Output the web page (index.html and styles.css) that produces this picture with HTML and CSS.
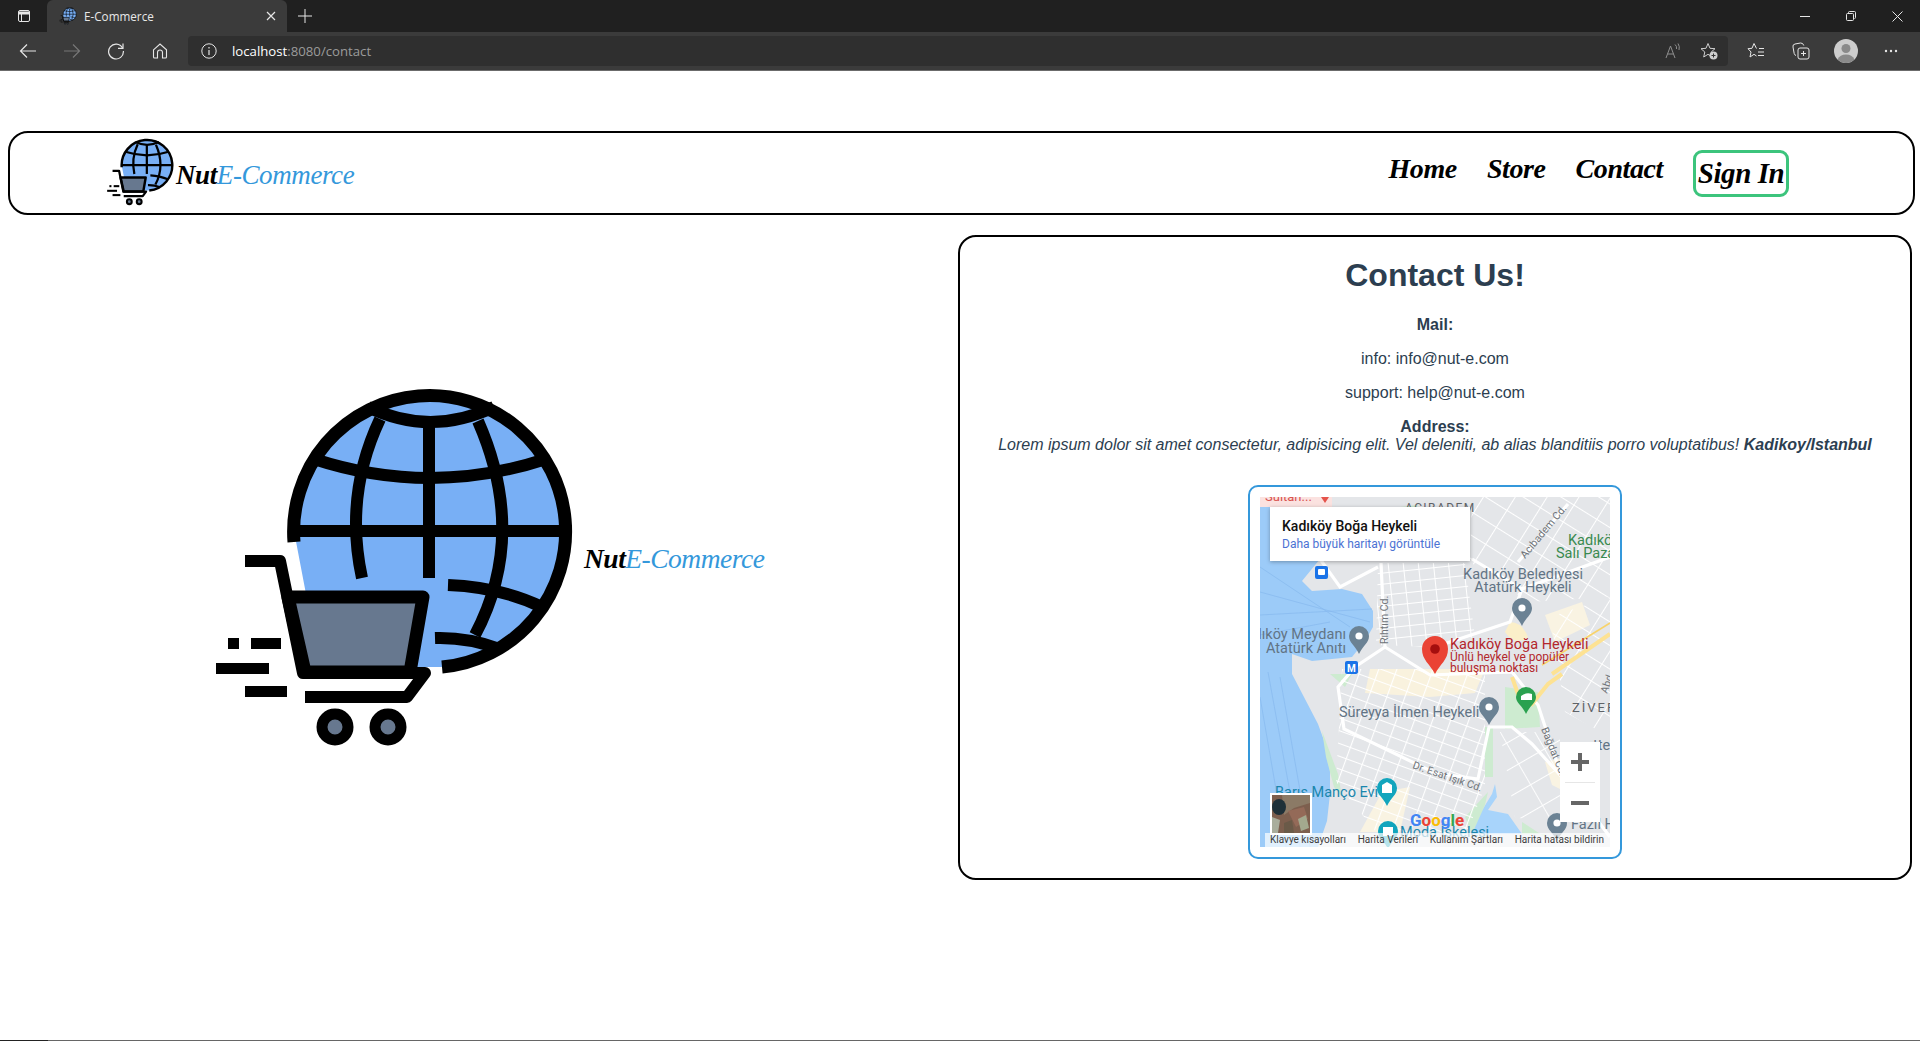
FILE: index.html
```html
<!DOCTYPE html>
<html lang="en">
<head>
  <meta charset="UTF-8" />
  <title>E-Commerce</title>
  <link rel="stylesheet" href="styles.css">
</head>
<body>
  <!-- logo used in the tab, the navbar and the hero -->
  <svg class="sprite" aria-hidden="true">
    <symbol id="logo" viewBox="0 0 370 365">
      <path d="M84 146 A136 136 0 1 1 232 282 L140 282 L100 230 Z" fill="#78aff5"/>
      <g fill="none" stroke="#000" stroke-width="12">
        <path d="M84 157 A136 136 0 1 1 232 282" stroke-width="13"/>
        <path d="M84 146 H356"/>
        <path d="M219 38 V193"/>
        <path d="M158 22 Q220 52 284 22"/>
        <path d="M104 74 Q220 112 336 74"/>
        <path d="M170 34 Q134 110 152 193"/>
        <path d="M268 36 Q318 150 265 250"/>
        <path d="M238 200 Q290 202 332 222"/>
        <path d="M225 253 Q258 252 290 264"/>
      </g>
      <path d="M78 212 H213 L200 287 H95 Z" fill="#67788f" stroke="#000" stroke-width="13" stroke-linejoin="round"/>
      <path d="M35 176 H70 L93 288 H215 L197 312 H95" fill="none" stroke="#000" stroke-width="12" stroke-linejoin="round"/>
      <circle cx="125" cy="342" r="13" fill="#67788f" stroke="#000" stroke-width="11"/>
      <circle cx="178" cy="342" r="13" fill="#67788f" stroke="#000" stroke-width="11"/>
      <rect x="18" y="253" width="11" height="11"/>
      <rect x="41" y="253" width="30" height="11"/>
      <rect x="6" y="278" width="53" height="11"/>
      <rect x="35" y="301" width="42" height="11"/>
    </symbol>
  </svg>

  <!-- browser chrome -->
  <header class="browser">
    <div class="tabstrip">
      <span class="strip-btn">
        <svg width="16" height="16" viewBox="0 0 16 16" fill="none" stroke="#e6e6e6"><rect x="2.5" y="2.5" width="11" height="11" rx="1.5"/><path d="M2.5 5H13.5" stroke-width="3"/><path d="M5.5 5V13.5"/></svg>
      </span>
      <div class="tab">
        <svg class="favicon"><use href="#logo"/></svg>
        <span class="tab-title">E-Commerce</span>
        <svg class="tab-close" width="10" height="10" viewBox="0 0 10 10" stroke="#e6e6e6" stroke-width="1.2"><path d="M1 1L9 9M9 1L1 9"/></svg>
      </div>
      <span class="new-tab">
        <svg width="14" height="14" viewBox="0 0 14 14" stroke="#e6e6e6"><path d="M7 0V14M0 7H14"/></svg>
      </span>
      <div class="window-btns">
        <span><svg width="10" height="10" viewBox="0 0 10 10" stroke="#e6e6e6"><path d="M0 5.5H10"/></svg></span>
        <span><svg width="10" height="10" viewBox="0 0 10 10" fill="none" stroke="#e6e6e6"><rect x="0.5" y="2.5" width="7" height="7" rx="1"/><path d="M2.5 2.5V1.5A1 1 0 0 1 3.5 .5H8.5A1 1 0 0 1 9.5 1.5V6.5A1 1 0 0 1 8.5 7.5"/></svg></span>
        <span><svg width="11" height="11" viewBox="0 0 11 11" stroke="#e6e6e6"><path d="M.5 .5L10.5 10.5M10.5 .5L.5 10.5"/></svg></span>
      </div>
    </div>
    <div class="toolbar">
      <span class="tool-btn"><svg width="18" height="16" viewBox="0 0 18 16" fill="none" stroke="#e6e6e6" stroke-width="1.2"><path d="M17 8H1.5M8 1.5L1.5 8L8 14.5"/></svg></span>
      <span class="tool-btn"><svg width="18" height="16" viewBox="0 0 18 16" fill="none" stroke="#777" stroke-width="1.2"><path d="M1 8H16.5M10 1.5L16.5 8L10 14.5"/></svg></span>
      <span class="tool-btn"><svg width="18" height="18" viewBox="0 0 18 18" fill="none" stroke="#e6e6e6" stroke-width="1.2"><path d="M15.5 6A7.4 7.4 0 1 0 16.4 9"/><path d="M16 1.5V6.4H11"/></svg></span>
      <span class="tool-btn"><svg width="16" height="16" viewBox="0 0 16 16" fill="none" stroke="#e6e6e6" stroke-width="1.1"><path d="M1.5 6.8L8 1L14.5 6.8V14A1 1 0 0 1 13.5 15H10.5V9.5A2.5 2.5 0 0 0 5.5 9.5V15H2.5A1 1 0 0 1 1.5 14Z"/></svg></span>
      <div class="address">
        <svg width="16" height="16" viewBox="0 0 16 16" fill="none" stroke="#e6e6e6"><circle cx="8" cy="8" r="7.2"/><path d="M8 7V12M8 4V5.4" stroke-width="1.2"/></svg>
        <span class="url"><b>localhost</b>:8080/contact</span>
        <span class="addr-icons">
          <svg width="16" height="16" viewBox="0 0 16 16" fill="none" stroke="#8f8f8f"><path d="M1 15L5.5 3L10 15M2.6 11H8.4"/><path d="M10 1.5Q12 3 11.5 6M13 .5Q15 3.5 14 7"/></svg>
          <svg width="18" height="18" viewBox="0 0 18 18" fill="none" stroke="#cfcfcf"><path d="M8 1.5L10 6.3L15 6.7L11.2 10L12.3 15L8 12.3L3.7 15L4.8 10L1 6.7L6 6.3Z"/><circle cx="13.5" cy="13.5" r="4" fill="#cfcfcf" stroke="none"/><path d="M13.5 11.5V15.5M11.5 13.5H15.5" stroke="#333"/></svg>
        </span>
      </div>
      <div class="tool-end">
        <span><svg width="18" height="18" viewBox="0 0 18 18" fill="none" stroke="#e6e6e6"><path d="M9.5 6.5L7 1.5L5 6.3L1 6.7L4 10L3 15L7 12.3L9.5 14M12 6.5H17M11 10H17M11 13.5H17"/></svg></span>
        <span><svg width="18" height="18" viewBox="0 0 18 18" fill="none" stroke="#e6e6e6"><rect x="6" y="6" width="11" height="11" rx="2"/><path d="M11.5 9V14M9 11.5H14"/><path d="M4 13.5Q2.5 13 2.2 11.5L1 5A2.5 2.5 0 0 1 3 2L8.5 1Q11 .8 11.8 3.5"/></svg></span>
        <span class="avatar"><svg width="24" height="24" viewBox="0 0 24 24"><circle cx="12" cy="12" r="12" fill="#cdcdcd"/><circle cx="12" cy="9.5" r="4.5" fill="#8a8a8a"/><path d="M3.5 20.5Q6 15.5 12 15.5Q18 15.5 20.5 20.5A12 12 0 0 1 3.5 20.5Z" fill="#8a8a8a"/></svg></span>
        <span><svg width="14" height="4" viewBox="0 0 14 4" fill="#e6e6e6"><circle cx="2" cy="2" r="1.2"/><circle cx="7" cy="2" r="1.2"/><circle cx="12" cy="2" r="1.2"/></svg></span>
      </div>
    </div>
  </header>

  <div class="page">
    <nav class="navbar">
      <a class="brand">
        <svg class="brand-logo"><use href="#logo"/></svg>
        <span class="wordmark">Nut<em>E-Commerce</em></span>
      </a>
      <ul class="nav-links">
        <li><a>Home</a></li>
        <li><a>Store</a></li>
        <li><a>Contact</a></li>
        <li class="sign-in"><a>Sign In</a></li>
      </ul>
    </nav>

    <main class="content">
      <section class="hero">
        <svg class="hero-logo"><use href="#logo"/></svg>
        <span class="wordmark wordmark-hero">Nut<em>E-Commerce</em></span>
      </section>

      <section class="contact-card">
        <h1>Contact Us!</h1>
        <p><strong>Mail:</strong></p>
        <p>info: info@nut-e.com</p>
        <p>support: help@nut-e.com</p>
        <p><strong>Address:</strong><br>
          <i>Lorem ipsum dolor sit amet consectetur, adipisicing elit. Vel deleniti, ab alias blanditiis porro voluptatibus! <strong>Kadikoy/Istanbul</strong></i></p>

        <div class="map-frame">
          <div class="map">
            <svg class="map-canvas" viewBox="0 0 350 350" width="350" height="350">
              <defs>
                <pattern id="gridA" width="15" height="11" patternUnits="userSpaceOnUse" patternTransform="rotate(-6)">
                  <path d="M0 0H15M0 0V11" stroke="#fff" stroke-width="2" fill="none"/>
                </pattern>
                <pattern id="gridB" width="17" height="12" patternUnits="userSpaceOnUse" patternTransform="rotate(20)">
                  <path d="M0 0H17M0 0V12" stroke="#fff" stroke-width="2.2" fill="none"/>
                </pattern>
                <pattern id="gridC" width="27" height="20" patternUnits="userSpaceOnUse" patternTransform="rotate(32)">
                  <path d="M0 0H27M0 0V20" stroke="#fff" stroke-width="2" fill="none"/>
                </pattern>
                <pattern id="gridD" width="30" height="24" patternUnits="userSpaceOnUse" patternTransform="rotate(-30)">
                  <path d="M0 0H30M0 0V24" stroke="#fff" stroke-width="1.8" fill="none"/>
                </pattern>
              </defs>
              <rect width="350" height="350" fill="#e4e6e9"/>
              <rect width="72" height="10" fill="#fbe2e0"/>

              <!-- water -->
              <path d="M0 10H12V62H60L42 84L52 94L82 92L102 97L113 114L113 130L105 144L92 160L52 164L32 157L32 177L58 227L70 260L70 297L67 324L58 350H0Z" fill="#9ccbf8"/>
              <path d="M235 287L237 300L228 313L248 317L262 337L212 337L218 320L232 297Z" fill="#a8d4fb"/>
              <g fill="none" stroke="#86b9ee" stroke-width=".7">
                <path d="M0 70L90 130M0 95L110 125M0 118L112 112M0 138L70 125M8 175L40 350M20 180L50 350M0 200L26 350"/>
              </g>

              <!-- land use -->
              <path d="M62 234L78 277L82 300L74 290L66 260Z" fill="#cdebd0"/>
              <path d="M70 177H92L85 190Z" fill="#cdebd0"/>
              <path d="M245 190L278 195L280 230L245 232Z" fill="#cdebd0"/>
              <rect x="225" y="230" width="8" height="50" fill="#cdebd0"/>
              <path d="M205 320L228 295L225 308L212 337Z" fill="#cdebd0"/>
              <path d="M262 325L285 340V337H262Z" fill="#cdebd0"/>
              <path d="M140 10L158 8L152 18Z" fill="#cdebd0"/>
              <path d="M110 172L225 172L215 196L170 200L105 196Z" fill="#f9f2de"/>
              <path d="M250 125Q262 125 268 140Q255 150 245 135Z" fill="#fbefc9"/>
              <path d="M285 118L322 105L330 128L295 145Z" fill="#f9f3e2"/>
              <path d="M122 295L150 290L140 335L100 335Z" fill="#f9f3e2"/>
              <path d="M285 265L308 260L306 295L292 288Z" fill="#f9f3e2"/>

              <!-- streets -->
              <path d="M118 66H205L215 140L170 150L116 148Z" fill="url(#gridA)"/>
              <path d="M82 172H225V290L205 340L120 340L76 285Z" fill="url(#gridB)"/>
              <path d="M212 0H350V100L268 105L210 65Z" fill="url(#gridC)"/>
              <path d="M240 235H300V330L255 320Z" fill="url(#gridD)"/>
              <path d="M290 120L350 100V240L305 215L295 150Z" fill="url(#gridC)"/>
              <g fill="none" stroke="#fff" stroke-width="3.2">
                <path d="M121 66L125 150L95 170L78 190L84 232L175 276L218 282L229 230H252L272 247L320 300L350 340"/>
                <path d="M258 65L308 7"/>
                <path d="M212 62L262 92L350 60"/>
                <path d="M125 150L170 178L252 175L278 208L300 275"/>
                <path d="M262 92L250 125L175 150"/>
                <path d="M60 62L80 90L118 70"/>
              </g>
              <g fill="none" stroke="#fde293" stroke-width="4">
                <path d="M292 177L350 137"/>
                <path d="M252 180L258 197L272 207L288 187L302 177"/>
              </g>
              <path d="M282 168L350 126" fill="none" stroke="#f8d36a" stroke-width="1.5"/>

              <!-- road names -->
              <g class="road-name">
                <text transform="translate(265 62) rotate(-50)">Acıbadem Cd.</text>
                <text transform="translate(128 147) rotate(-90)">Rıhtım Cd.</text>
                <text transform="translate(281 232) rotate(68)">Bağdat Cd.</text>
                <text transform="translate(152 271) rotate(19)">Dr. Esat Işık Cd.</text>
                <text transform="translate(347 197) rotate(-70)">Abd</text>
              </g>

              <!-- place labels -->
              <text class="area" x="145" y="15">ACIBADEM</text>
              <text class="area area-ziver" x="312" y="215">ZİVER</text>
              <text class="poi-small" x="5" y="4" fill="#d9534f">Sultan...</text>
              <path d="M61 0H69L65 6Z" fill="#e5534b"/>
              <text class="poi green-label" x="308" y="48">Kadıkö</text>
              <text class="poi green-label" x="296" y="61">Salı Paza</text>
              <text class="poi" x="263" y="82" text-anchor="middle">Kadıköy Belediyesi</text>
              <text class="poi" x="263" y="95" text-anchor="middle">Atatürk Heykeli</text>
              <text class="poi" x="86" y="142" text-anchor="end">Kadıköy Meydanı</text>
              <text class="poi" x="86" y="156" text-anchor="end">Atatürk Anıtı</text>
              <text class="poi" x="79" y="220">Süreyya İlmen Heykeli</text>
              <text class="poi" x="333" y="253">tte</text>
              <text class="poi" x="311" y="332">Fazıl H</text>
              <text class="poi teal-label" x="15" y="300">Barış Manço Evi</text>
              <text class="poi teal-label" x="140" y="340">Moda İskelesi</text>

              <!-- pins -->
              <g fill="#6b8294">
                <path id="pinShape" d="M262 129C258 120 252 118 252 111A10 10 0 0 1 272 111C272 118 266 120 262 129Z"/>
                <use href="#pinShape" x="-163" y="28"/>
                <use href="#pinShape" x="-33" y="99"/>
                <use href="#pinShape" x="35" y="215"/>
              </g>
              <g fill="#fff">
                <circle cx="262" cy="111" r="3.6"/>
                <circle cx="99" cy="139" r="3.6"/>
                <circle cx="229" cy="210" r="3.6"/>
                <circle cx="297" cy="326" r="3.6"/>
              </g>
              <path d="M266 217C262 208 256 206 256 200A10 10 0 0 1 276 200C276 206 270 208 266 217Z" fill="#2aa14f"/>
              <path d="M261 199Q266 195 272 197V203H261Z" fill="#fff"/>
              <path d="M127 309C123 300 117 298 117 291A10 10 0 0 1 137 291C137 298 131 300 127 309Z" fill="#12a5bd"/>
              <path d="M122 296V288L127 285L132 288V296Z" fill="#fff"/>
              <path d="M128 352C124 343 118 341 118 334A10 10 0 0 1 138 334C138 341 132 343 128 352Z" fill="#12a5bd"/>
              <path d="M123 339V330H133V339Z" fill="#fff"/>
              <rect x="55" y="69" width="13" height="13" rx="2" fill="#1a73e8"/>
              <rect x="58" y="72" width="7" height="6" rx="1" fill="#fff"/>
              <rect x="85" y="164" width="13" height="13" rx="2" fill="#1a73e8"/>
              <text class="metro" x="91.5" y="174.5" text-anchor="middle">M</text>

              <!-- selected place -->
              <path d="M175 177C170 167 162 163 162 152A13 13 0 0 1 188 152C188 163 180 167 175 177Z" fill="#ea4335"/>
              <circle cx="175" cy="152" r="4.8" fill="#a50e0e"/>
              <text class="poi picked" x="190" y="152">Kadıköy Boğa Heykeli</text>
              <text class="picked-sub" x="190" y="164">Ünlü heykel ve popüler</text>
              <text class="picked-sub" x="190" y="175">buluşma noktası</text>

              <text class="google-mark" x="150" y="329"><tspan fill="#4285f4">G</tspan><tspan fill="#ea4335">o</tspan><tspan fill="#fbbc05">o</tspan><tspan fill="#4285f4">g</tspan><tspan fill="#34a853">l</tspan><tspan fill="#ea4335">e</tspan></text>
            </svg>

            <div class="info-window">
              <div class="info-title">Kadıköy Boğa Heykeli</div>
              <a class="info-link">Daha büyük haritayı görüntüle</a>
            </div>

            <div class="zoom-ctrl">
              <svg width="18" height="18" viewBox="0 0 18 18" fill="#666"><path d="M7 0H11V7H18V11H11V18H7V11H0V7H7Z"/></svg>
              <hr>
              <svg width="18" height="4" viewBox="0 0 18 4" fill="#666"><rect width="18" height="4"/></svg>
            </div>

            <div class="satellite">
              <svg width="38" height="38" viewBox="0 0 38 38">
                <rect width="38" height="38" fill="#7d5f4e"/>
                <path d="M10 0H38V8L22 13L12 20Z" fill="#8b7a66"/>
                <ellipse cx="7" cy="12" rx="7" ry="8" fill="#1f3038"/>
                <path d="M16 16L32 12L36 24L24 32Z" fill="#946a58"/>
                <path d="M26 24L34 20L37 33L29 36Z" fill="#a3a98e"/>
                <path d="M0 22L8 25L6 38H0Z" fill="#a9ad9c"/>
                <path d="M12 28L20 25L22 38H12Z" fill="#6a5a48"/>
              </svg>
            </div>

            <div class="attribution">
              <span>Klavye kısayolları</span>
              <span>Harita Verileri</span>
              <span>Kullanım Şartları</span>
              <span>Harita hatası bildirin</span>
            </div>
          </div>
        </div>
      </section>
    </main>
  </div>

  <div class="taskbar-edge"></div>
</body>
</html>
```

FILE: styles.css
```css
/* Reset some default margins and paddings */
* {
  box-sizing: border-box;
  margin: 0;
  padding: 0;
}

html,
body {
  height: 1041px;
  overflow: hidden;
}

body {
  position: relative;
  font-family: "Liberation Sans", Arial, sans-serif;
  font-size: 16px;
  color: #2c3e50;
  background: #fff;
}

.sprite {
  display: none;
}

/* browser chrome */
.browser {
  height: 71px;
  font-family: "Open Sans", "Noto Sans", sans-serif;
}

.tabstrip {
  display: flex;
  align-items: flex-end;
  height: 32px;
  background: #202020;
}

.strip-btn {
  display: flex;
  align-items: center;
  justify-content: center;
  width: 47px;
  height: 32px;
}

.tab {
  display: flex;
  align-items: center;
  width: 240px;
  height: 32px;
  padding: 0 11px 0 12px;
  background: #3b3b3b;
  border-radius: 6px 6px 0 0;
}

.favicon {
  width: 18px;
  height: 18px;
}

.tab-title {
  margin-left: 7px;
  font-size: 11.7px;
  color: #e8e8e8;
}

.tab-close {
  margin-left: auto;
}

.new-tab {
  display: flex;
  align-items: center;
  justify-content: center;
  width: 36px;
  height: 32px;
}

.window-btns {
  display: flex;
  margin-left: auto;
}

.window-btns span {
  display: flex;
  align-items: center;
  justify-content: center;
  width: 46px;
  height: 32px;
}

.toolbar {
  display: flex;
  align-items: center;
  height: 39px;
  padding: 0 0 1px 6px;
  background: #3b3b3b;
  border-bottom: 1px solid #6b6b6b;
}

.tool-btn {
  display: flex;
  align-items: center;
  justify-content: center;
  width: 44px;
  height: 30px;
}

.address {
  display: flex;
  align-items: center;
  width: 1540px;
  height: 30px;
  margin-left: 6px;
  padding: 0 10px 0 13px;
  background: #2f2f2f;
  border-radius: 4px;
}

.url {
  margin-left: 15px;
  font-size: 13.2px;
  color: #9b9b9b;
}

.url b {
  font-weight: 400;
  color: #fff;
}

.addr-icons {
  display: flex;
  align-items: center;
  gap: 19px;
  margin-left: auto;
}

.tool-end {
  display: flex;
  margin-left: 5px;
}

.tool-end span {
  display: flex;
  align-items: center;
  justify-content: center;
  width: 45px;
  height: 30px;
}

/* page */
.page {
  padding: 60px 5px 0 8px;
}

.navbar {
  display: flex;
  align-items: center;
  height: 84px;
  padding: 0 124px 0 96px;
  border: 2px solid #000;
  border-radius: 20px;
  background: #fff;
}

.brand {
  display: flex;
  align-items: center;
}

.brand-logo {
  width: 69px;
  height: 68px;
  margin-top: -2px;
}

.wordmark {
  font-family: "Liberation Serif", "DejaVu Serif", serif;
  font-weight: 700;
  font-style: italic;
  color: #000;
}

.wordmark em {
  font-weight: 400;
  color: #3498db;
}

.brand .wordmark {
  margin: 5px 0 0 1px;
  font-size: 27px;
  letter-spacing: -0.4px;
}

.nav-links {
  display: flex;
  align-items: center;
  gap: 30px;
  margin-left: auto;
  list-style: none;
}

.nav-links a {
  display: block;
  font-family: "Liberation Serif", "DejaVu Serif", serif;
  font-size: 28px;
  font-weight: 700;
  font-style: italic;
  letter-spacing: -0.4px;
  color: #000;
}

.nav-links li {
  margin-bottom: 9px;
}

.nav-links .sign-in {
  margin: 0;
}

.nav-links .sign-in a {
  display: flex;
  align-items: center;
  justify-content: center;
  width: 96px;
  height: 47px;
  font-size: 29px;
  border: 3px solid #3cc47c;
  border-radius: 9px;
}

.content {
  display: flex;
  align-items: flex-start;
  margin-top: 20px;
}

.hero {
  display: flex;
  align-items: center;
  flex: 0 0 950px;
  padding: 150px 0 0 202px;
}

.hero-logo {
  width: 370px;
  height: 365px;
}

.wordmark-hero {
  margin: 0 0 17px 4px;
  font-size: 27.5px;
  letter-spacing: -0.5px;
}

.contact-card {
  width: 954px;
  height: 645px;
  text-align: center;
  border: 2px solid #000;
  border-radius: 18px;
}

.contact-card h1 {
  margin: 20px 0 22px;
  font-size: 32px;
  line-height: 37px;
}

.contact-card p {
  margin-bottom: 16px;
  line-height: 18px;
}

.map-frame {
  width: 374px;
  height: 374px;
  margin: 31px auto 0;
  padding: 10px;
  border: 2px solid #3498db;
  border-radius: 10px;
}

/* embedded map, overlays sit on top of it */
.map {
  position: relative;
  width: 350px;
  height: 350px;
  overflow: hidden;
  font-family: Roboto, Arial, sans-serif;
  text-align: left;
}

.map-canvas {
  display: block;
}

.map-canvas text {
  font-family: Roboto, Arial, sans-serif;
}

.road-name text {
  font-size: 10.5px;
  fill: #6f7479;
}

.area {
  font-size: 12px;
  letter-spacing: 1.4px;
  fill: #5f6368;
}

.area-ziver {
  font-size: 13px;
  letter-spacing: 2px;
}

.poi {
  font-size: 14.5px;
  fill: #627485;
}

.poi-small {
  font-size: 13px;
}

.green-label {
  font-size: 14.5px;
  fill: #3a8a50;
}

.teal-label {
  fill: #1a86ad;
}

.metro {
  font-size: 10px;
  font-weight: 700;
  fill: #fff;
}

.picked {
  font-size: 14.5px;
  fill: #b3262c;
}

.picked-sub {
  font-size: 12px;
  fill: #b3262c;
}

.google-mark {
  font-size: 17px;
  font-weight: 700;
}

.info-window {
  position: absolute;
  left: 10px;
  top: 10px;
  width: 200px;
  height: 54px;
  padding: 11px 12px;
  background: #fff;
  box-shadow: 0 1px 4px rgba(0, 0, 0, 0.3);
}

.info-title {
  font-size: 14px;
  font-weight: 500;
  line-height: 16px;
  color: #111;
}

.info-link {
  display: block;
  margin-top: 3px;
  font-size: 12px;
  line-height: 14px;
  color: #4c72d3;
}

.zoom-ctrl {
  position: absolute;
  left: 300px;
  top: 245px;
  display: flex;
  flex-direction: column;
  align-items: center;
  width: 40px;
  height: 80px;
  padding-top: 11px;
  background: #fff;
}

.zoom-ctrl hr {
  width: 30px;
  margin: 11px 0 18px;
  border: 0;
  border-top: 1px solid #e6e6e6;
}

.satellite {
  position: absolute;
  left: 10px;
  top: 296px;
  width: 42px;
  height: 42px;
  border: 2px solid #fff;
}

.satellite svg {
  display: block;
}

.attribution {
  position: absolute;
  left: 5px;
  bottom: 0;
  display: flex;
  justify-content: space-between;
  width: 345px;
  height: 14px;
  padding: 0 6px 0 5px;
  font-size: 10px;
  line-height: 14px;
  color: #3c3c3c;
  background: rgba(255, 255, 255, 0.7);
}

.taskbar-edge {
  position: absolute;
  left: 0;
  right: 0;
  bottom: 0;
  height: 1px;
  background: linear-gradient(to right, #222 48px, #666 48px);
}
```
